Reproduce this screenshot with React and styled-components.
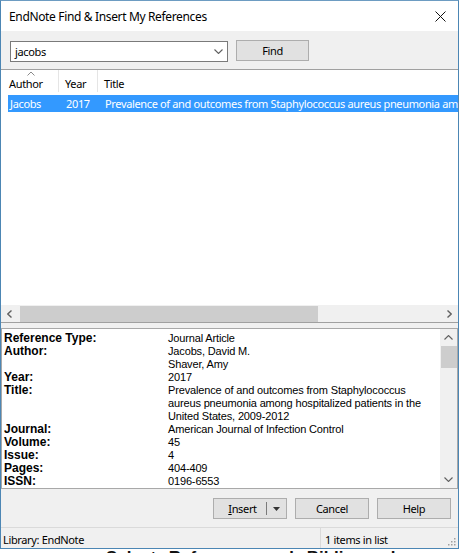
import React from "react";
import styled, { createGlobalStyle } from "styled-components";

const GlobalStyle = createGlobalStyle`
  html, body {
    margin: 0;
    padding: 0;
    background: #ffffff;
    overflow: hidden;
  }
`;

const uiFont = `"Noto Sans", "Open Sans", sans-serif`;
const detailFont = `"Liberation Sans", Arial, sans-serif`;

const Page = styled.div`
  width: 459px;
  height: 553px;
  display: flex;
  flex-direction: column;
  overflow: hidden;
`;

const Window = styled.div`
  width: 459px;
  height: 549px;
  box-sizing: border-box;
  border: 1px solid #4c86b4;
  border-top-color: #6d9cc2;
  display: flex;
  flex-direction: column;
  font-family: ${uiFont};
  font-size: 11px;
  letter-spacing: -0.35px;
  color: #000;
  background: #f0f0f0;
  flex-shrink: 0;
`;

const TitleBar = styled.div`
  height: 30px;
  background: #ffffff;
  display: flex;
  align-items: center;
  justify-content: space-between;
  padding: 0 8px 0 8px;
  flex-shrink: 0;
`;

const TitleText = styled.div`
  font-size: 12px;
  color: #000;
  padding-top: 1px;
`;

const CloseButton = styled.div`
  width: 16px;
  height: 16px;
  display: flex;
  align-items: center;
  justify-content: center;
  margin-right: 2px;
`;

const Toolbar = styled.div`
  height: 39px;
  box-sizing: border-box;
  display: flex;
  align-items: flex-start;
  gap: 8px;
  padding: 9px 0 0 9px;
  border-bottom: 1px solid #a0a0a0;
  flex-shrink: 0;
`;

const Combo = styled.div`
  width: 218px;
  height: 21px;
  margin-top: 1px;
  box-sizing: border-box;
  border: 1px solid #7a7a7a;
  background: #ffffff;
  display: flex;
  align-items: center;
  justify-content: space-between;
  padding: 0 4px 0 4px;
`;

const Button = styled.div`
  width: ${(p) => p.$width || 74}px;
  height: 21px;
  box-sizing: border-box;
  border: 1px solid #adadad;
  background: #e1e1e1;
  display: flex;
  align-items: center;
  justify-content: center;
  font-size: 11px;
  color: #000;
`;

const List = styled.div`
  height: 252px;
  background: #ffffff;
  display: flex;
  flex-direction: column;
  flex-shrink: 0;
`;

const ListBody = styled.div`
  flex: 1;
  display: flex;
  flex-direction: column;
`;

const HeaderRow = styled.div`
  height: 22px;
  display: flex;
  align-items: stretch;
  margin-bottom: 3px;
`;

const HeaderCell = styled.div`
  position: relative;
  width: ${(p) => (p.$width ? `${p.$width}px` : "auto")};
  flex: ${(p) => (p.$width ? "none" : 1)};
  box-sizing: border-box;
  border-right: ${(p) => (p.$last ? "none" : "1px solid #e5e5e5")};
  padding: 7px 0 0 ${(p) => p.$pad || 6}px;
  font-size: 11px;
  line-height: 14px;
`;

const SortArrow = styled.svg`
  position: absolute;
  top: 1px;
  left: 26px;
`;

const Row = styled.div`
  height: 17px;
  margin-left: 7px;
  display: flex;
  align-items: center;
  background: ${(p) => (p.$selected ? "#3399ff" : "transparent")};
  color: ${(p) => (p.$selected ? "#ffffff" : "#000")};
  white-space: nowrap;
  overflow: hidden;
  font-size: 11px;
`;

const Cell = styled.div`
  width: ${(p) => (p.$width ? `${p.$width}px` : "auto")};
  flex: ${(p) => (p.$width ? "none" : 1)};
  padding-left: ${(p) => p.$pad || 2}px;
  box-sizing: border-box;
  overflow: hidden;
`;

const HScroll = styled.div`
  height: 17px;
  background: #f0f0f0;
  display: flex;
  align-items: center;
`;

const ScrollArrow = styled.div`
  width: ${(p) => p.$size || 17}px;
  height: ${(p) => p.$size || 17}px;
  display: flex;
  align-items: center;
  justify-content: center;
  flex-shrink: 0;
`;

const HTrack = styled.div`
  flex: 1;
  height: 17px;
  display: flex;
  align-items: center;
`;

const HThumb = styled.div`
  width: 298px;
  height: 16px;
  background: #cdcdcd;
  margin-left: 2px;
`;

const Splitter = styled.div`
  height: 5px;
  background: #f0f0f0;
  border-top: 1px solid #a0a0a0;
  flex-shrink: 0;
`;

const Detail = styled.div`
  height: 161px;
  box-sizing: border-box;
  border: 1px solid #a8a8a8;
  background: #ffffff;
  display: flex;
  flex-shrink: 0;
`;

const DetailContent = styled.div`
  flex: 1;
  min-width: 0;
  display: grid;
  grid-template-columns: 164px 1fr;
  align-content: start;
  padding: 3px 0 0 2px;
  font-family: ${detailFont};
  font-size: 11px;
  letter-spacing: -0.15px;
  line-height: 13px;
  overflow: hidden;
`;

const Label = styled.div`
  font-weight: bold;
  font-size: 12px;
  letter-spacing: 0;
  white-space: nowrap;
`;

const Value = styled.div`
  white-space: nowrap;
`;

const VScroll = styled.div`
  width: 17px;
  background: #f0f0f0;
  display: flex;
  flex-direction: column;
  flex-shrink: 0;
`;

const VTrack = styled.div`
  flex: 1;
`;

const VThumb = styled.div`
  width: 16px;
  height: 22px;
  margin-left: 1px;
  background: #cdcdcd;
`;

const ButtonRow = styled.div`
  height: 38px;
  display: flex;
  justify-content: flex-end;
  align-items: flex-start;
  gap: 8px;
  padding: 9px 7px 0 0;
  box-sizing: border-box;
  flex-shrink: 0;
`;

const SplitLabel = styled.div`
  flex: 1;
  text-align: center;
  padding-left: 5px;
`;

const SplitDivider = styled.div`
  width: 1px;
  height: 13px;
  background: #7a7a7a;
`;

const SplitArrow = styled.div`
  width: 19px;
  display: flex;
  justify-content: center;
`;

const StatusBar = styled.div`
  flex: 1;
  display: flex;
  align-items: center;
  border-top: 1px solid #dadada;
  font-size: 11px;
  position: relative;
`;

const StatusPane = styled.div`
  width: ${(p) => (p.$width ? `${p.$width}px` : "auto")};
  flex: ${(p) => (p.$width ? "none" : 1)};
  height: 100%;
  display: flex;
  align-items: center;
  padding-left: ${(p) => p.$pad}px;
  padding-top: 3px;
  box-sizing: border-box;
  border-right: ${(p) => (p.$divider ? "1px solid #dadada" : "none")};
`;

const Grip = styled.svg`
  position: absolute;
  right: 2px;
  bottom: 2px;
`;

const Underneath = styled.div`
  height: 4px;
  overflow: hidden;
  flex-shrink: 0;
`;

const UnderText = styled.div`
  font-family: "Liberation Sans", Arial, sans-serif;
  font-weight: bold;
  font-size: 17px;
  line-height: 17px;
  padding-left: 106px;
  word-spacing: 8px;
  color: #111;
  white-space: nowrap;
`;

const Chevron = ({ dir = "down", color = "#606060", w = 8, h = 5 }) => {
  const paths = {
    down: `M0.5 0.5 L${w / 2} ${h - 0.5} L${w - 0.5} 0.5`,
    up: `M0.5 ${h - 0.5} L${w / 2} 0.5 L${w - 0.5} ${h - 0.5}`,
  };
  return (
    <svg width={w} height={h} viewBox={`0 0 ${w} ${h}`}>
      <path d={paths[dir]} fill="none" stroke={color} strokeWidth="1.1" />
    </svg>
  );
};

const SideChevron = ({ dir }) => (
  <svg width="5" height="8" viewBox="0 0 5 8">
    <path
      d={dir === "left" ? "M4.5 0.5 L0.8 4 L4.5 7.5" : "M0.5 0.5 L4.2 4 L0.5 7.5"}
      fill="none"
      stroke="#606060"
      strokeWidth="1.4"
    />
  </svg>
);

const details = [
  ["Reference Type:", ["Journal Article"]],
  ["Author:", ["Jacobs, David M.", "Shaver, Amy"]],
  ["Year:", ["2017"]],
  [
    "Title:",
    [
      "Prevalence of and outcomes from Staphylococcus",
      "aureus pneumonia among hospitalized patients in the",
      "United States, 2009-2012",
    ],
  ],
  ["Journal:", ["American Journal of Infection Control"]],
  ["Volume:", ["45"]],
  ["Issue:", ["4"]],
  ["Pages:", ["404-409"]],
  ["ISSN:", ["0196-6553"]],
];

export default function App() {
  return (
    <Page>
      <GlobalStyle />
      <Window>
        <TitleBar>
          <TitleText>EndNote Find &amp; Insert My References</TitleText>
          <CloseButton>
            <svg width="11" height="11" viewBox="0 0 11 11">
              <path d="M0.5 0.5 L10.5 10.5 M10.5 0.5 L0.5 10.5" stroke="#111" strokeWidth="1" />
            </svg>
          </CloseButton>
        </TitleBar>

        <Toolbar>
          <Combo>
            <span>jacobs</span>
            <Chevron dir="down" w={9} h={5} />
          </Combo>
          <Button $width={73}>Find</Button>
        </Toolbar>

        <List>
          <ListBody>
            <HeaderRow>
              <HeaderCell $width={58} $pad={8}>
                <SortArrow width="8" height="5" viewBox="0 0 8 5">
                  <path d="M0.5 4.5 L4 1 L7.5 4.5" fill="none" stroke="#8a8a8a" strokeWidth="1" />
                </SortArrow>
                Author
              </HeaderCell>
              <HeaderCell $width={39} $pad={6}>
                Year
              </HeaderCell>
              <HeaderCell $last $pad={6}>
                Title
              </HeaderCell>
            </HeaderRow>
            <Row $selected>
              <Cell $width={51} $pad={2}>
                Jacobs
              </Cell>
              <Cell $width={39} $pad={7}>
                2017
              </Cell>
              <Cell $pad={7}>
                Prevalence of and outcomes from Staphylococcus aureus pneumonia among hospitalized patients in the United States, 2009-2012
              </Cell>
            </Row>
          </ListBody>
          <HScroll>
            <ScrollArrow>
              <SideChevron dir="left" />
            </ScrollArrow>
            <HTrack>
              <HThumb />
            </HTrack>
            <ScrollArrow>
              <SideChevron dir="right" />
            </ScrollArrow>
          </HScroll>
        </List>

        <Splitter />

        <Detail>
          <DetailContent>
            {details.map(([label, values]) => (
              <React.Fragment key={label}>
                <Label>{label}</Label>
                <Value>
                  {values.map((v) => (
                    <div key={v}>{v}</div>
                  ))}
                </Value>
              </React.Fragment>
            ))}
          </DetailContent>
          <VScroll>
            <ScrollArrow>
              <Chevron dir="up" w={9} h={5} />
            </ScrollArrow>
            <VThumb />
            <VTrack />
            <ScrollArrow>
              <Chevron dir="down" w={9} h={5} />
            </ScrollArrow>
          </VScroll>
        </Detail>

        <ButtonRow>
          <Button $width={74}>
            <SplitLabel>
              <u>I</u>nsert
            </SplitLabel>
            <SplitDivider />
            <SplitArrow>
              <svg width="7" height="4" viewBox="0 0 7 4">
                <path d="M0 0 L7 0 L3.5 4 Z" fill="#333" />
              </svg>
            </SplitArrow>
          </Button>
          <Button $width={74}>Cancel</Button>
          <Button $width={74}>Help</Button>
        </ButtonRow>

        <StatusBar>
          <StatusPane $width={320} $pad={2} $divider>
            Library: EndNote
          </StatusPane>
          <StatusPane $pad={4}>1 items in list</StatusPane>
          <Grip width="10" height="10" viewBox="0 0 10 10">
            {[
              [8, 2],
              [8, 5],
              [5, 5],
              [8, 8],
              [5, 8],
              [2, 8],
            ].map(([x, y]) => (
              <rect key={`${x}-${y}`} x={x} y={y} width="1.5" height="1.5" fill="#a0a0a0" />
            ))}
          </Grip>
        </StatusBar>
      </Window>
      <Underneath>
        <UnderText>Select Reference and Bibliography</UnderText>
      </Underneath>
    </Page>
  );
}
